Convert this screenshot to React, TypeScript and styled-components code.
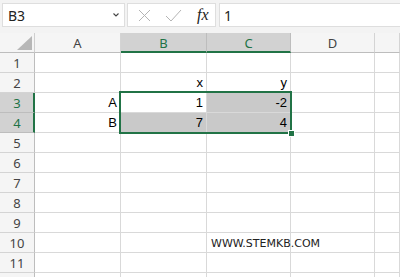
import { Fragment } from "react";
import styled, { createGlobalStyle } from "styled-components";

const GlobalStyle = createGlobalStyle`
  html, body {
    margin: 0;
    padding: 0;
    background: #ffffff;
    overflow: hidden;
  }
  * {
    box-sizing: border-box;
  }
`;

const GREEN = "#217346";
const LINE = "#d9d9d9";

const Page = styled.div`
  width: 400px;
  height: 277px;
  overflow: hidden;
  font-family: "Noto Sans", "Liberation Sans", sans-serif;
  background: #fff;
`;

const FormulaBar = styled.div`
  height: 33px;
  background: #f3f3f3;
  display: flex;
  align-items: flex-start;
  padding: 3px 0 0 2px;
  gap: 2px;
`;

const NameBox = styled.div`
  width: 123px;
  height: 24px;
  background: #fff;
  border: 1px solid #dedede;
  display: flex;
  align-items: center;
  justify-content: space-between;
  padding: 0 4px 0 5px;
  font-size: 14px;
  color: #222;
`;

const IconBox = styled.div`
  width: 89px;
  height: 24px;
  background: #fff;
  border: 1px solid #dedede;
  display: flex;
  align-items: center;
  padding-left: 10px;
  gap: 14px;
`;

const Fx = styled.span`
  font-family: "Liberation Serif", serif;
  font-style: italic;
  font-size: 16px;
  color: #222;
  margin-left: 1px;
`;

const Input = styled.div`
  flex: 1;
  height: 24px;
  margin-left: 1px;
  background: #fff;
  border: 1px solid #dedede;
  border-right: none;
  display: flex;
  align-items: center;
  padding-left: 4px;
  font-size: 14px;
  color: #222;
`;

const Sheet = styled.div`
  position: relative;
  display: grid;
  grid-template-columns: 35px 86px 86px 84px 84px 1fr;
  grid-auto-rows: 20px;
`;

const Corner = styled.div`
  background: #f5f5f5;
  border-right: 1px solid #cfcfcf;
  border-bottom: 1px solid #bdbdbd;
  position: relative;
  &::after {
    content: "";
    position: absolute;
    right: 2px;
    bottom: 2px;
    width: 0;
    height: 0;
    border-left: 15px solid transparent;
    border-bottom: 14px solid #b7b7b7;
  }
`;

const ColHead = styled.div<{ $on?: boolean }>`
  background: ${(p) => (p.$on ? "#d2d2d2" : "#f5f5f5")};
  border-right: 1px solid ${(p) => (p.$on ? "#bdbdbd" : "#d4d4d4")};
  border-bottom: ${(p) => (p.$on ? `2px solid ${GREEN}` : "1px solid #bdbdbd")};
  color: ${(p) => (p.$on ? GREEN : "#444")};
  font-size: 13px;
  display: flex;
  align-items: center;
  justify-content: center;
  padding-top: ${(p) => (p.$on ? "1px" : "0")};
`;

const RowHead = styled.div<{ $on?: boolean }>`
  background: ${(p) => (p.$on ? "#d2d2d2" : "#f5f5f5")};
  border-right: ${(p) => (p.$on ? `2px solid ${GREEN}` : "1px solid #bdbdbd")};
  border-bottom: 1px solid ${(p) => (p.$on ? "#bdbdbd" : "#d4d4d4")};
  color: ${(p) => (p.$on ? GREEN : "#444")};
  font-size: 13px;
  display: flex;
  align-items: center;
  justify-content: center;
  padding-left: ${(p) => (p.$on ? "1px" : "0")};
`;

const Cell = styled.div<{ $fill?: boolean }>`
  background: ${(p) => (p.$fill ? "#c9c9c9" : "#fff")};
  border-right: 1px solid ${LINE};
  border-bottom: 1px solid ${LINE};
  font-family: "Liberation Sans", Arial, sans-serif;
  font-size: 13px;
  color: #000;
  display: flex;
  align-items: flex-end;
  justify-content: flex-end;
  padding: 0 3px 2px 0;
  white-space: nowrap;
`;

const NoteCell = styled(Cell)`
  justify-content: flex-start;
  align-items: center;
  padding: 1px 0 0 4px;
  overflow: visible;
  position: relative;
  z-index: 1;
`;

const Note = styled.span`
  font-family: "DejaVu Sans", Verdana, sans-serif;
  font-size: 11px;
  color: #222;
`;

const Selection = styled.div`
  position: absolute;
  left: 119px;
  top: 58px;
  width: 173px;
  height: 43px;
  border: 2px solid ${GREEN};
  pointer-events: none;
`;

const Handle = styled.div`
  position: absolute;
  right: -5px;
  bottom: -5px;
  width: 7px;
  height: 7px;
  background: ${GREEN};
  border: 1px solid #fff;
`;

const cols = ["A", "B", "C", "D", "E"];
const data: Record<string, string> = {
  B2: "x",
  C2: "y",
  A3: "A",
  B3: "1",
  C3: "-2",
  A4: "B",
  B4: "7",
  C4: "4",
};
const filled = ["C3", "B4", "C4"];

const App = () => {
  const rows = Array.from({ length: 12 }, (_, i) => i + 1);
  return (
    <Page>
      <GlobalStyle />
      <FormulaBar>
        <NameBox>
          <span>B3</span>
          <svg width="8" height="6" viewBox="0 0 8 6">
            <path d="M1.5 1.5 L4 4 L6.5 1.5" fill="none" stroke="#444" strokeWidth="1.1" />
          </svg>
        </NameBox>
        <IconBox>
          <svg width="13" height="13" viewBox="0 0 13 13">
            <path d="M1 1 L12 12 M12 1 L1 12" stroke="#b4b4b4" strokeWidth="1" />
          </svg>
          <svg width="17" height="13" viewBox="0 0 17 13">
            <path d="M1 7 L6 12 L16 1" fill="none" stroke="#b4b4b4" strokeWidth="1" />
          </svg>
          <Fx>fx</Fx>
        </IconBox>
        <Input>1</Input>
      </FormulaBar>
      <Sheet>
        <Corner />
        {cols.map((c) => (
          <ColHead key={c} $on={c === "B" || c === "C"}>
            {c === "E" ? "" : c}
          </ColHead>
        ))}
        {rows.map((r) => (
          <Fragment key={r}>
            <RowHead $on={r === 3 || r === 4}>{r < 12 ? r : ""}</RowHead>
            {cols.map((c) => {
              const id = `${c}${r}`;
              if (id === "C10") {
                return (
                  <NoteCell key={id}>
                    <Note>WWW.STEMKB.COM</Note>
                  </NoteCell>
                );
              }
              return (
                <Cell key={id} $fill={filled.includes(id)}>
                  {data[id]}
                </Cell>
              );
            })}
          </Fragment>
        ))}
        <Selection>
          <Handle />
        </Selection>
      </Sheet>
    </Page>
  );
};

export default App;
